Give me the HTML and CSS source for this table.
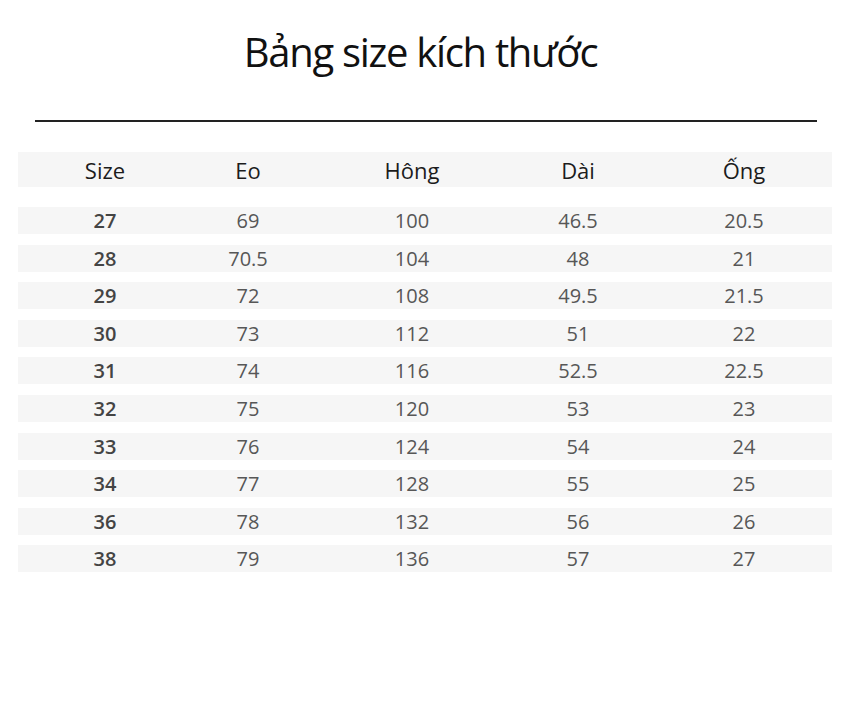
FILE: index.html
```html
<!DOCTYPE html>
<html lang="vi">
<head>
<meta charset="utf-8">
<title>Bảng size kích thước</title>
<link rel="stylesheet" href="styles.css">
</head>
<body>
<div class="page">
  <h1 class="title">Bảng size kích thước</h1>
  <div class="rule"></div>
  <div class="table">
    <div class="row head"><span>Size</span><span>Eo</span><span>Hông</span><span>Dài</span><span>Ống</span></div>
    <div class="body">
      <div class="row"><span class="size">27</span><span>69</span><span>100</span><span>46.5</span><span>20.5</span></div>
      <div class="row"><span class="size">28</span><span>70.5</span><span>104</span><span>48</span><span>21</span></div>
      <div class="row"><span class="size">29</span><span>72</span><span>108</span><span>49.5</span><span>21.5</span></div>
      <div class="row"><span class="size">30</span><span>73</span><span>112</span><span>51</span><span>22</span></div>
      <div class="row"><span class="size">31</span><span>74</span><span>116</span><span>52.5</span><span>22.5</span></div>
      <div class="row"><span class="size">32</span><span>75</span><span>120</span><span>53</span><span>23</span></div>
      <div class="row"><span class="size">33</span><span>76</span><span>124</span><span>54</span><span>24</span></div>
      <div class="row"><span class="size">34</span><span>77</span><span>128</span><span>55</span><span>25</span></div>
      <div class="row"><span class="size">36</span><span>78</span><span>132</span><span>56</span><span>26</span></div>
      <div class="row"><span class="size">38</span><span>79</span><span>136</span><span>57</span><span>27</span></div>
    </div>
  </div>
</div>
</body>
</html>
```

FILE: styles.css
```css
html, body {
  margin: 0;
  padding: 0;
  background: #ffffff;
}
.page {
  width: 853px;
  height: 724px;
  font-family: "Open Sans", "Noto Sans", sans-serif;
}
.title {
  margin: 0;
  padding: 22px 12px 0 0;
  height: 60px;
  text-align: center;
  font-weight: 400;
  font-size: 40px;
  line-height: 60px;
  letter-spacing: -1.3px;
  color: #111111;
}
.rule {
  margin: 38px 36px 0 35px;
  height: 2px;
  background: #222222;
}
.table {
  margin: 30px 21px 0 18px;
}
.row {
  display: grid;
  grid-template-columns: 174px 112px 216px 116px 196px;
  align-items: center;
  height: 27px;
  background: #f6f6f6;
  font-size: 20px;
  color: #575757;
}
.row span {
  text-align: center;
}
.row span:last-child {
  padding-left: 20px;
}
.row.head {
  height: 35px;
  font-size: 22px;
  color: #1c1c1c;
}
.body {
  margin-top: 20px;
  display: flex;
  flex-direction: column;
  gap: 10.6px;
}
.size {
  font-weight: 600;
  color: #444444;
}
```
